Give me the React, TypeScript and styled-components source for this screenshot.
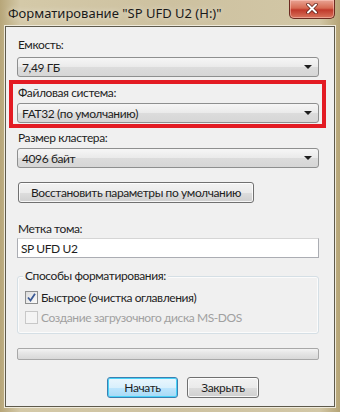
import styled, { createGlobalStyle } from 'styled-components';

const FONT = `Lato, 'Liberation Sans', sans-serif`;
const TITLE_FONT = `'Noto Sans', 'Open Sans', 'Liberation Sans', sans-serif`;

const GlobalStyle = createGlobalStyle`
  html, body {
    margin: 0;
    padding: 0;
    width: 340px;
    height: 412px;
    overflow: hidden;
  }
  body {
    font-family: ${FONT};
    font-size: 12px;
    letter-spacing: -0.4px;
    color: #1e1e1e;
  }
`;

const Frame = styled.div`
  width: 340px;
  height: 412px;
  box-sizing: border-box;
  display: flex;
  flex-direction: column;
  padding: 0 5px 5px 5px;
  background: linear-gradient(90deg, #b7a679 0%, #d4c9a8 6%, #cdc1a0 50%, #d2c7a6 94%, #b5a476 100%);
`;

const TitleBar = styled.div`
  height: 26px;
  display: flex;
  align-items: center;
  justify-content: space-between;
  flex-shrink: 0;
`;

const Title = styled.div`
  font-family: ${TITLE_FONT};
  font-size: 13px;
  letter-spacing: 0;
  color: #1a1a1a;
  padding-left: 3px;
  margin-top: -1px;
  text-shadow: 0 0 6px rgba(255, 255, 255, 0.7);
`;

const CloseButton = styled.div`
  width: 44px;
  height: 18px;
  margin-top: -8px;
  border: 1px solid #6b2a20;
  border-top: none;
  border-radius: 0 0 5px 5px;
  background: linear-gradient(180deg, #e9a494 0%, #d66a52 45%, #c0392b 55%, #d8745c 100%);
  display: flex;
  align-items: center;
  justify-content: center;
  box-shadow: inset 0 0 0 1px rgba(255, 210, 200, 0.5);
`;

const Panel = styled.div`
  flex: 1;
  display: flex;
  flex-direction: column;
  background: #f0f0f0;
  border: 1px solid #5e5a4c;
  box-shadow: 0 0 0 1px #efeadb;
  padding: 10px 15px 0 11px;
`;

const Label = styled.div`
  height: 16px;
  line-height: 16px;
  margin-left: 1px;
  white-space: nowrap;
`;

const Field = styled.div<{ top?: number; gap?: number }>`
  display: flex;
  flex-direction: column;
  gap: ${(p) => p.gap ?? 4}px;
  margin-top: ${(p) => p.top ?? 0}px;
`;

const Highlight = styled.div`
  margin: 3px -7px 0 -8px;
  border: 4px solid #e31b23;
  padding: 1px 3px 1px 4px;
`;

const Combo = styled.div`
  height: 20px;
  box-sizing: border-box;
  border: 1px solid #8e8f8f;
  border-radius: 3px;
  background: linear-gradient(180deg, #f6f6f6 0%, #eaeaea 50%, #dcdcdc 51%, #d6d6d6 100%);
  display: flex;
  align-items: center;
  justify-content: space-between;
  padding: 0 6px 0 4px;
  white-space: nowrap;
`;

const Arrow = styled.div`
  width: 0;
  height: 0;
  border-left: 4px solid transparent;
  border-right: 4px solid transparent;
  border-top: 4px solid #1e1e1e;
`;

const PushButton = styled.div<{ width: number; focused?: boolean }>`
  width: ${(p) => p.width}px;
  height: 21px;
  box-sizing: border-box;
  border: 1px solid ${(p) => (p.focused ? '#3c7fb1' : '#707070')};
  border-radius: 3px;
  background: ${(p) =>
    p.focused
      ? 'linear-gradient(180deg, #eaf6fd 0%, #d9f0fc 50%, #bee6fd 51%, #a7d9f5 100%)'
      : 'linear-gradient(180deg, #f2f2f2 0%, #ebebeb 50%, #dddddd 51%, #cfcfcf 100%)'};
  box-shadow: inset 0 0 0 1px ${(p) => (p.focused ? '#48d2f7' : 'rgba(255,255,255,0.8)')};
  display: flex;
  align-items: center;
  justify-content: center;
  white-space: nowrap;
`;

const RestoreRow = styled.div`
  margin-top: 14px;
  padding-left: 1px;
`;

const TextBox = styled.div`
  height: 20px;
  box-sizing: border-box;
  border: 1px solid #abadb3;
  border-top-color: #d5d5d5;
  background: #fff;
  display: flex;
  align-items: center;
  padding-left: 3px;
`;

const Group = styled.div`
  position: relative;
  margin-top: 18px;
  height: 58px;
  box-sizing: border-box;
  border: 1px solid #d5dfe5;
  border-radius: 3px;
  box-shadow: inset 0 0 0 1px #fbfbfb;
  padding: 12px 7px 0 7px;
  display: flex;
  flex-direction: column;
  gap: 4px;
`;

const Legend = styled.div`
  position: absolute;
  top: -9px;
  left: 5px;
  padding: 0 2px;
  background: #f0f0f0;
  line-height: 16px;
`;

const CheckRow = styled.div<{ disabled?: boolean }>`
  display: flex;
  align-items: center;
  gap: 3px;
  height: 16px;
  white-space: nowrap;
  color: ${(p) => (p.disabled ? '#a0a0a0' : '#1e1e1e')};
`;

const Box = styled.div<{ disabled?: boolean }>`
  width: 13px;
  height: 13px;
  box-sizing: border-box;
  border: 1px solid ${(p) => (p.disabled ? '#c8c8c8' : '#8e8f8f')};
  background: ${(p) =>
    p.disabled ? '#f4f4f4' : 'linear-gradient(135deg, #dcdcdc 0%, #fbfbfb 100%)'};
  display: flex;
  align-items: center;
  justify-content: center;
`;

const Progress = styled.div`
  margin-top: 14px;
  height: 12px;
  box-sizing: border-box;
  border: 1px solid #a8a8a8;
  border-radius: 2px;
  background: linear-gradient(180deg, #f3f3f3 0%, #e6e6e6 40%, #d8d8d8 100%);
`;

const Footer = styled.div`
  margin-top: 17px;
  display: flex;
  justify-content: flex-end;
  gap: 9px;
  padding-right: 60px;
`;

export default function App() {
  return (
    <>
      <GlobalStyle />
      <Frame>
        <TitleBar>
          <Title>Форматирование "SP UFD U2 (H:)"</Title>
          <CloseButton>
            <svg width="12" height="11" viewBox="0 0 12 11">
              <path
                d="M2 1.5 L10 9.5 M10 1.5 L2 9.5"
                stroke="#5a1a12"
                strokeWidth="3.4"
                strokeLinecap="round"
              />
              <path
                d="M2 1.5 L10 9.5 M10 1.5 L2 9.5"
                stroke="#ffffff"
                strokeWidth="2"
                strokeLinecap="round"
              />
            </svg>
          </CloseButton>
        </TitleBar>
        <Panel>
          <Field>
            <Label>Емкость:</Label>
            <Combo>
              <span>7,49 ГБ</span>
              <Arrow />
            </Combo>
          </Field>
          <Highlight>
            <Field gap={2}>
              <Label>Файловая система:</Label>
              <Combo>
                <span>FAT32 (по умолчанию)</span>
                <Arrow />
              </Combo>
            </Field>
          </Highlight>
          <Field top={2} gap={2}>
            <Label>Размер кластера:</Label>
            <Combo>
              <span>4096 байт</span>
              <Arrow />
            </Combo>
          </Field>
          <RestoreRow>
            <PushButton width={236}>Восстановить параметры по умолчанию</PushButton>
          </RestoreRow>
          <Field top={18} gap={1}>
            <Label>Метка тома:</Label>
            <TextBox>SP UFD U2</TextBox>
          </Field>
          <Group>
            <Legend>Способы форматирования:</Legend>
            <CheckRow>
              <Box>
                <svg width="9" height="9" viewBox="0 0 9 9">
                  <path d="M1 4.5 L3.5 7.5 L8 0.8" fill="none" stroke="#3b5a96" strokeWidth="1.8" />
                </svg>
              </Box>
              Быстрое (очистка оглавления)
            </CheckRow>
            <CheckRow disabled>
              <Box disabled />
              Создание загрузочного диска MS-DOS
            </CheckRow>
          </Group>
          <Progress />
          <Footer>
            <PushButton width={71} focused>
              Начать
            </PushButton>
            <PushButton width={72}>Закрыть</PushButton>
          </Footer>
        </Panel>
      </Frame>
    </>
  );
}
